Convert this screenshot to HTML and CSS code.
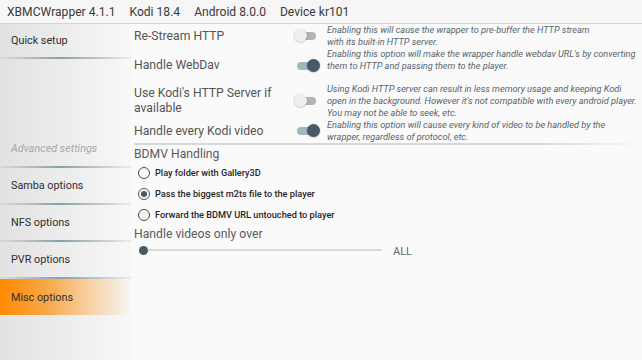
FILE: index.html
```html
<!DOCTYPE html>
<html>
<head>
<meta charset="utf-8">
<link rel="stylesheet" href="styles.css">
</head>
<body>
<div class="header">
  <span>XBMCWrapper 4.1.1</span>
  <span>Kodi 18.4</span>
  <span>Android 8.0.0</span>
  <span>Device kr101</span>
</div>
<div class="layout">
  <nav class="sidebar">
    <div class="nav-item quick">Quick setup</div>
    <div class="nav-spacer"></div>
    <div class="nav-item section">Advanced settings</div>
    <div class="nav-item">Samba options</div>
    <div class="nav-item">NFS options</div>
    <div class="nav-item">PVR options</div>
    <div class="nav-item selected">Misc options</div>
  </nav>
  <main class="main">
    <div class="settings">
      <div class="setting r1">
        <div class="title">Re-Stream HTTP</div>
        <div class="toggle"><span class="track"></span><span class="thumb"></span></div>
        <div class="desc">Enabling this will cause the wrapper to pre-buffer the HTTP stream<br>with its built-in HTTP server.</div>
      </div>
      <div class="setting r2">
        <div class="title">Handle WebDav</div>
        <div class="toggle on"><span class="track"></span><span class="thumb"></span></div>
        <div class="desc">Enabling this option will make the wrapper handle webdav URL's by converting<br>them to HTTP and passing them to the player.</div>
      </div>
      <div class="setting r3">
        <div class="title">Use Kodi's HTTP Server if available</div>
        <div class="toggle"><span class="track"></span><span class="thumb"></span></div>
        <div class="desc">Using Kodi HTTP server can result in less memory usage and keeping Kodi<br>open in the background. However it's not compatible with every android player.<br>You may not be able to seek, etc.</div>
      </div>
      <div class="setting r4">
        <div class="title">Handle every Kodi video</div>
        <div class="toggle on"><span class="track"></span><span class="thumb"></span></div>
        <div class="desc">Enabling this option will cause every kind of video to be handled by the<br>wrapper, regardless of protocol, etc.</div>
      </div>
    </div>
    <div class="label">BDMV Handling</div>
    <div class="radios">
      <div class="radio"><span class="circle"></span>Play folder with Gallery3D</div>
      <div class="radio checked"><span class="circle"></span>Pass the biggest m2ts file to the player</div>
      <div class="radio"><span class="circle"></span>Forward the BDMV URL untouched to player</div>
    </div>
    <div class="label">Handle videos only over</div>
    <div class="slider-row">
      <div class="slider"><span class="knob"></span></div>
      <div class="slider-value">ALL</div>
    </div>
  </main>
</div>
</body>
</html>
```
FILE: styles.css
```css
* { box-sizing: border-box; margin: 0; padding: 0; }
html, body { width: 642px; height: 360px; overflow: hidden; }
body {
  font-family: Roboto, "Liberation Sans", sans-serif;
  background: #fafafa;
  color: #333;
}
.header {
  height: 24px;
  display: flex;
  align-items: center;
  gap: 14px;
  padding-left: 7px;
  font-size: 12.1px;
  color: #3a3a3a;
  background: #f6f6f6;
  border-bottom: 1px solid #d4d4d4;
}
.layout { display: flex; height: 336px; }
.sidebar {
  width: 131px;
  flex: none;
  display: flex;
  flex-direction: column;
  background: linear-gradient(to right, #e2e2e2, #f8f8f8);
}
.nav-item {
  height: 37px;
  display: flex;
  align-items: center;
  padding-left: 11px;
  font-size: 10.8px;
  color: #2e2e2e;
  border-bottom: 2px solid;
  border-image: linear-gradient(to right, rgba(140,160,172,0.1), #8a9eaa 45%, rgba(140,160,172,0.1)) 1;
}
.nav-item.quick { height: 35px; }
.nav-spacer { height: 72px; }
.nav-item.section { color: #a8a8a8; font-style: italic; }
.nav-item.selected {
  border-bottom: none;
  height: 36px;
  background: linear-gradient(to right, #ff8a00 0%, #f8a745 35%, #f8d3a8 70%, rgba(250,250,250,0) 100%);
}
.main { flex: 1; padding-left: 3px; }
.settings {
  border-bottom: 2px solid;
  border-image: linear-gradient(to right, #d3dade, #d3dade 80%, rgba(211,218,222,0)) 1;
}
.setting {
  display: grid;
  grid-template-columns: 157px 36px 1fr;
  align-items: center;
}
.r1 { height: 24px; }
.r2 { height: 35px; }
.r3 { height: 36px; }
.r4 { height: 24px; }
.title {
  font-size: 12.2px;
  color: #555;
  line-height: 15px;
  padding-right: 4px;
}
.desc {
  align-self: start;
  font-size: 9.2px;
  font-style: italic;
  line-height: 12px;
  color: #56646e;
  white-space: nowrap;
}
.toggle { position: relative; width: 28px; height: 14px; }
.track {
  position: absolute; left: 6px; top: 3px;
  width: 19px; height: 8px; border-radius: 4px;
  background: #b3b3b3;
}
.thumb {
  position: absolute; left: 3px; top: 0;
  width: 13px; height: 13px; border-radius: 50%;
  background: #efefef;
  box-shadow: 0 0.5px 1.5px rgba(0,0,0,0.3);
}
.toggle.on .track { background: #a6b4bb; }
.toggle.on .thumb { left: 16px; background: #455a64; }
.label {
  height: 17px;
  display: flex;
  align-items: center;
  font-size: 12.2px;
  color: #5a5a5a;
}
.radios { display: flex; flex-direction: column; padding-left: 4px; }
.radio {
  height: 21px;
  display: flex;
  align-items: center;
  gap: 5px;
  font-size: 9.2px;
  font-weight: 500;
  color: #262626;
}
.circle {
  width: 12px; height: 12px; border-radius: 50%;
  border: 1.3px solid #4a4a4a;
  display: flex; align-items: center; justify-content: center;
}
.radio.checked .circle { border-color: #455a64; }
.radio.checked .circle::after {
  content: ""; width: 6px; height: 6px; border-radius: 50%; background: #455a64;
}
.slider-row {
  display: flex;
  align-items: center;
  height: 16px;
  padding-left: 6px;
}
.slider {
  width: 242px; height: 2px; background: #d9d9d9;
  display: flex; align-items: center;
}
.knob { width: 9px; height: 9px; border-radius: 50%; background: #455a64; margin-left: -1px; }
.slider-value {
  margin-left: 11px; margin-top: 3px;
  font-size: 11px; color: #666;
}
```
